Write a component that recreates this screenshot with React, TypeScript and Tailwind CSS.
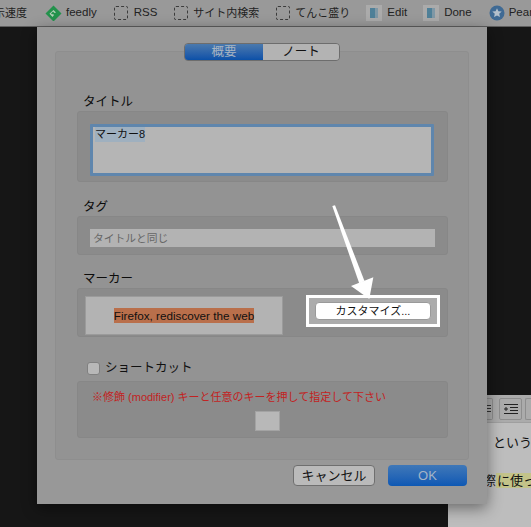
const font = { fontFamily: '"Liberation Sans", "Noto Sans CJK JP", sans-serif' };

function Dashed() {
  return <span className="h-[14px] w-[14px] rounded-[2px] border border-dashed border-[#3c3c3c]" />;
}

function PageIcon() {
  return (
    <span className="flex h-[16px] w-[16px] items-center justify-center bg-[#ababab]">
      <span className="flex h-[10px] w-[8px] justify-end bg-[#4f8098]">
        <span className="h-full w-[3px] bg-[#7f98a6]" />
      </span>
    </span>
  );
}

function ToolItem({ icon, label, className }: { icon: React.ReactNode; label: string; className: string }) {
  return (
    <div className={`flex shrink-0 items-center ${className}`}>
      {icon}
      <span className="whitespace-nowrap">{label}</span>
    </div>
  );
}

function Bookmarks() {
  return (
    <div className="flex h-[27px] items-center overflow-hidden border-b border-[#5f5f5f] bg-[#999999] text-[11.5px] text-[#222222]">
      <span className="ml-[-6px] w-[36px] shrink-0 whitespace-nowrap text-[11px]">示速度</span>
      <ToolItem
        className="ml-[15px] gap-[4px]"
        label="feedly"
        icon={
          <svg width="17" height="17" viewBox="0 0 17 17">
            <path d="M8.5 0.5 L16.5 8.5 L9.5 15.5 Q8.5 16.5 7.5 15.5 L0.5 8.5 Z" fill="#23924c" />
            <path d="M8.5 5 L11 7.5 L9.5 8 L8 6.5 L6 8.5 L7 9.5 L8 9 L9 10 L7.5 12 L4.5 8.8 Z" fill="#b4d0b8" />
          </svg>
        }
      />
      <ToolItem className="ml-[17px] gap-[6px]" label="RSS" icon={<Dashed />} />
      <ToolItem className="ml-[17px] gap-[5px] text-[11px]" label="サイト内検索" icon={<Dashed />} />
      <ToolItem className="ml-[17px] gap-[5px] text-[11px]" label="てんこ盛り" icon={<Dashed />} />
      <ToolItem className="ml-[16px] gap-[5px]" label="Edit" icon={<PageIcon />} />
      <ToolItem className="ml-[16px] gap-[5px]" label="Done" icon={<PageIcon />} />
      <ToolItem
        className="ml-[17px] gap-[4px]"
        label="Pearltrees"
        icon={
          <svg width="16" height="16" viewBox="0 0 16 16">
            <circle cx="8" cy="8" r="7.5" fill="#3f6a94" />
            <path d="M8 3.2 L9.4 6.3 L12.7 6.6 L10.2 8.8 L11 12 L8 10.4 L5 12 L5.8 8.8 L3.3 6.6 L6.6 6.3 Z" fill="#b4c0cc" />
          </svg>
        }
      />
    </div>
  );
}

function DocBehind() {
  return (
    <div className="absolute left-[448px] top-[395px] h-[132px] w-[83px] bg-[#bdbdbd]">
      <div className="flex h-[28px] items-center border-b border-[#9f9f9f] bg-[#ababab] pl-[39px]">
        <span className="flex h-[22px] w-[6px] shrink-0 flex-col justify-center gap-[2px] rounded-r-[2px] border border-l-0 border-[#8e8e8e]">
          <span className="h-px w-[4px] bg-[#333]" />
          <span className="h-px w-[4px] bg-[#333]" />
          <span className="h-px w-[4px] bg-[#333]" />
        </span>
        <span className="ml-[6px] flex h-[22px] w-[23px] shrink-0 items-center justify-center rounded-[2px] border border-[#8e8e8e]">
          <svg width="14" height="12" viewBox="0 0 14 12" stroke="#222" fill="none">
            <path d="M0 1.5 H14 M6 4.5 H14 M6 7.5 H14 M0 10.5 H14 M0 6 H4 M2 4 V8" />
          </svg>
        </span>
        <span className="ml-[3px] h-[22px] w-[6px] shrink-0 rounded-l-[2px] border border-r-0 border-[#8e8e8e]" />
      </div>
      <div className="pl-[45px] pt-[10px] text-[13px] leading-[20px] text-[#111111] whitespace-nowrap">という</div>
      <div className="mt-[20px] flex whitespace-nowrap pl-[39px] text-[13px] leading-[15px] text-[#111111]">
        <span className="ml-[-4px]">際</span>
        <span className="bg-[#c3c389] pl-px">に使っ</span>
      </div>
    </div>
  );
}

function Group({ className, children }: { className: string; children: React.ReactNode }) {
  return <div className={`rounded-[3px] border border-[#878787] bg-[#8b8b8b] ${className}`}>{children}</div>;
}

function Label({ children, className }: { children: React.ReactNode; className: string }) {
  return <div className={`ml-[27px] pt-px text-[12.5px] leading-[17px] text-[#0c0c0c] ${className}`}>{children}</div>;
}

function Tabs() {
  return (
    <div className="absolute left-[147px] top-[16px] flex h-[18px] w-[156px] overflow-hidden rounded-[4px] border border-[#6d6d6d] text-[12.5px] leading-[16px]">
      <div className="w-[78px] bg-gradient-to-b from-[#4a79ad] to-[#0a50a8] text-center text-[#a9b5c2]">概要</div>
      <div className="flex-1 bg-[#b3b3b3] text-center text-[#111111]">ノート</div>
    </div>
  );
}

function Dialog() {
  return (
    <div className="absolute left-[37px] top-[27px] h-[477px] w-[450px] bg-[#989898] shadow-[0_4px_14px_rgba(0,0,0,0.45)]">
      <Tabs />
      <div className="mx-[18px] mt-[24px] h-[409px] w-[414px] rounded-[3px] border border-[#8e8e8e] bg-[#939393] pt-[41px]">
        <Label className="">タイトル</Label>
        <Group className="ml-[21px] h-[71px] w-[371px] pl-[12px] pt-[12px]">
          <div className="h-[52px] w-[344px] rounded-[1px] border-[3px] border-[#5f86ad] bg-[#b5b5b5] px-[2px] text-[11px] leading-[15px] text-[#111111]">
            <span className="inline-block bg-[#9fb0bf]">マーカー8</span>
          </div>
        </Group>
        <Label className="mt-[16px]">タグ</Label>
        <Group className="ml-[21px] h-[39px] w-[371px] pl-[12px] pt-[12px]">
          <div className="h-[18px] w-[345px] bg-[#b3b3b3] pl-[3px] text-[10.75px] leading-[18px] text-[#666666]">タイトルと同じ</div>
        </Group>
        <Label className="mt-[15px]">マーカー</Label>
        <Group className="ml-[21px] flex h-[49px] w-[371px] items-start pl-[7px] pt-[7px]">
          <div className="flex h-[39px] w-[198px] items-center justify-center border border-[#9b9b9b] bg-[#b3b3b3] text-[11.7px] text-[#111111]">
            <span className="bg-[#b96f4b] leading-[15px]">Firefox, rediscover the web</span>
          </div>
        </Group>
        <div className="ml-[31px] mt-[22px] flex h-[18px] items-center gap-[5px] text-[12.5px] text-[#111111]">
          <span className="h-[13px] w-[13px] rounded-[3px] border border-[#808080] bg-[#b8b8b8]" />
          <span>ショートカット</span>
        </div>
        <Group className="ml-[21px] mt-[4px] h-[57px] w-[371px] pt-[7px]">
          <div className="pl-[14px] text-[11px] leading-[16px] text-[#c22222]">※修飾 (modifier) キーと任意のキーを押して指定して下さい</div>
          <div className="ml-[177px] mt-[6px] h-[20px] w-[25px] border border-[#a3a3a3] bg-[#b8b8b8]" />
        </Group>
      </div>
      <div className="mr-[20px] mt-[5px] flex justify-end gap-[13px] text-[13px]">
        <div className="h-[21px] w-[82px] rounded-[4px] border border-[#6f6f6f] bg-[#bababa] text-center leading-[19px] text-[#111111]">キャンセル</div>
        <div className="h-[21px] w-[79px] rounded-[4px] bg-gradient-to-b from-[#3f78b8] to-[#0c58b4] text-center leading-[21px] text-[#a4b4c6]">OK</div>
      </div>
    </div>
  );
}

function Annotation() {
  return (
    <>
      <div className="absolute left-[306px] top-[295px] flex h-[32px] w-[134px] items-center justify-center border-[3px] border-white bg-[#acacac]">
        <div className="h-[18px] w-[116px] rounded-[4px] border border-[#9a9a9a] bg-white text-center text-[11px] leading-[16px] text-[#111111]">カスタマイズ...</div>
      </div>
      <svg className="absolute left-0 top-0" width="531" height="527" viewBox="0 0 531 527">
        <path d="M332.3 206 L335 205.3 L364.5 281 L359.3 283.5 Z" fill="#ffffff" />
        <path d="M351 286 L373.3 277.3 L369.3 299 Z" fill="#ffffff" />
      </svg>
    </>
  );
}

export default function App() {
  return (
    <div className="relative h-[527px] w-[531px] overflow-hidden bg-[#161616]" style={font}>
      <Bookmarks />
      <DocBehind />
      <Dialog />
      <Annotation />
    </div>
  );
}
